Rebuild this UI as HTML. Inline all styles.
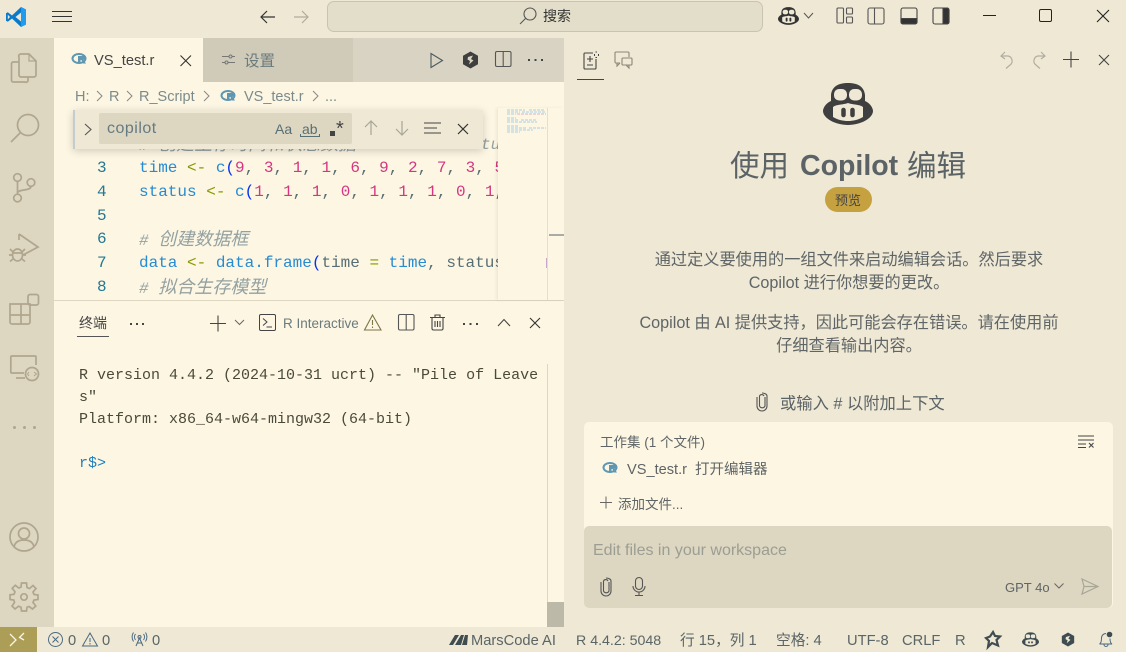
<!DOCTYPE html>
<html lang="zh"><head><meta charset="utf-8">
<style>
html,body{margin:0;padding:0;width:1126px;height:652px;overflow:hidden;background:#EEE8D5}
body{position:relative;font-family:"Liberation Sans","Noto Sans CJK SC",sans-serif;color:#586E75}
.a{position:absolute}
.t{position:absolute;white-space:pre;line-height:1}
svg{position:absolute;overflow:visible;fill:none}
.m{font-family:"Liberation Mono","Noto Sans CJK SC",monospace;font-size:16px}
.c{color:#93A1A1;font-style:italic}
.c i{font-size:18px;font-style:italic;line-height:16px}
.b{color:#268BD2}.n{color:#D33682}.g{color:#859900}.p{color:#0431FA}.d{color:#586E75}
.ln{color:#237893;font-family:"Liberation Mono",monospace;font-size:16px}
.st{font-size:14.700px;top:634px;color:#5A6566}
.cen{position:absolute;left:564px;width:570px;text-align:center;white-space:pre;color:#5F6566;font-size:16.200px;line-height:1}
</style></head><body>

<!-- backgrounds -->
<div class="a" style="left:0;top:38px;width:54px;height:589px;background:#DDD6C1"></div>
<div class="a" style="left:54px;top:38px;width:510px;height:589px;background:#FDF6E3"></div>
<div class="a" style="left:203px;top:38px;width:150px;height:44px;background:#D0CBB8"></div>
<div class="a" style="left:353px;top:38px;width:211px;height:44px;background:#D9D3C3"></div>
<div class="a" style="left:54px;top:300px;width:510px;height:1px;background:#DDD6C1"></div>
<div class="a" style="left:0;top:627px;width:37px;height:25px;background:#AC9D57"></div>

<!-- title bar -->
<svg style="left:5px;top:6px" width="22" height="22" viewBox="0 0 22 22"><path d="M16 1 21 3.500V18.500L16 21 7 12.500 2.800 15.800 1 14.800V7.200L2.800 6.200 7 9.500Z" fill="#0A7ACB"/><path d="M2.800 8.600 5 11 2.800 13.400Z" fill="#EEE8D5"/><path d="M16 1 21 3.500V18.500L16 21Z" fill="#1F9CF0"/><path d="M16 6.500 16 15.500 10.500 11Z" fill="#EEE8D5"/></svg>
<svg style="left:51px;top:10px" width="22" height="14" stroke="#333" stroke-width="1"><path d="M1 1.500H21M1 6.500H21M1 11.500H21"/></svg>
<svg style="left:259px;top:9px" width="18" height="16" stroke="#333" stroke-width="1.200"><path d="M2 8H16M8 2 2 8 8 14"/></svg>
<svg style="left:292px;top:9px" width="18" height="16" stroke="#B0AC9C" stroke-width="1.200"><path d="M2 8H16M10 2 16 8 10 14"/></svg>
<div class="a" style="left:327px;top:1px;width:434px;height:29px;background:#E3DECA;border:1px solid #C9C4AF;border-radius:7px"></div>
<svg style="left:519px;top:6px" width="18" height="19" stroke="#555" stroke-width="1.100"><circle cx="11" cy="8" r="6"/><path d="M7 12 1 18"/></svg>
<div class="t" style="left:543px;top:9px;font-size:14px;color:#333">搜索</div>
<svg style="left:778px;top:7px" width="21" height="18" viewBox="0 0 50 42"><path d="M25 0C34 0 41 3 42 12V18C47 20 50 25 50 28 50 35 38 42 25 42S0 35 0 28C0 25 3 20 8 18V12C9 3 16 0 25 0Z" fill="#333"/><path d="M10 24C14 21 20 22 25 20 30 22 36 21 40 24V34C35 37 30 38 25 38S15 37 10 34Z" fill="#EEE8D5"/><rect x="11" y="6" width="13" height="11" rx="5" fill="#EEE8D5"/><rect x="26" y="6" width="13" height="11" rx="5" fill="#EEE8D5"/><path d="M20.500 27V32M29.500 27V32" stroke="#333" stroke-width="4.500" stroke-linecap="round"/></svg>
<svg style="left:803px;top:12px" width="11" height="8" stroke="#555"><path d="M1 1 5.500 6 10 1"/></svg>
<svg style="left:836px;top:7px" width="18" height="18" stroke="#555" stroke-width="1.100"><rect x="1" y="1" width="6.500" height="15" rx="1"/><rect x="10.500" y="1" width="6" height="6" rx="1"/><rect x="10.500" y="10" width="6" height="6" rx="1"/></svg>
<svg style="left:867px;top:7px" width="19" height="18" stroke="#555" stroke-width="1.100"><rect x="1" y="1" width="16" height="16" rx="2"/><path d="M7.500 1V17"/></svg>
<svg style="left:900px;top:7px" width="19" height="18" stroke="#444" stroke-width="1.100"><rect x="1" y="1" width="16" height="16" rx="2"/><path d="M1 11.500H17V15A2 2 0 0 1 15 17H3A2 2 0 0 1 1 15Z" fill="#333"/></svg>
<svg style="left:932px;top:7px" width="19" height="18" stroke="#444" stroke-width="1.100"><rect x="1" y="1" width="16" height="16" rx="2"/><path d="M11 1H15A2 2 0 0 1 17 3V15A2 2 0 0 1 15 17H11Z" fill="#333"/></svg>
<div class="a" style="left:983px;top:15px;width:13px;height:1px;background:#222"></div>
<div class="a" style="left:1039px;top:9px;width:11px;height:11px;border:1px solid #222;border-radius:2px"></div>
<svg style="left:1096px;top:9px" width="14" height="14" stroke="#222" stroke-width="1.100"><path d="M1 1 13 13M13 1 1 13"/></svg>

<!-- activity bar -->
<svg style="left:10px;top:52px" width="28" height="32" stroke="#B0A68E" stroke-width="1.700"><path d="M9 5A2 2 0 0 1 11 2H19L26 9V23A2 2 0 0 1 24 25H11A2 2 0 0 1 9 23Z"/><path d="M19 2V9H26" stroke-width="1.200"/><path d="M9 10H3A2 2 0 0 0 1.500 12V28A2 2 0 0 0 3 30H15A2 2 0 0 0 18 28V25"/></svg>
<svg style="left:10px;top:112px" width="30" height="32" stroke="#B0A68E" stroke-width="1.700"><circle cx="18" cy="13" r="10.500"/><path d="M10.500 20.500 1 30"/></svg>
<svg style="left:12px;top:172px" width="26" height="32" stroke="#B0A68E" stroke-width="1.700"><circle cx="5.500" cy="5.500" r="3.800"/><circle cx="5.500" cy="26" r="3.800"/><circle cx="19" cy="10.500" r="3.800"/><path d="M5.500 9.500V22M5.500 21C5.500 17 19 19 19 14.500"/></svg>
<svg style="left:9px;top:232px" width="32" height="32" stroke="#B0A68E" stroke-width="1.700"><path d="M10 2 29 15 14 23"/><path d="M10 2V8"/><ellipse cx="8.500" cy="23" rx="5" ry="6"/><path d="M1 17 4 20M16 17 13 20M0 23H3.500M13.500 23H17M1 29.500 4 27M16 29.500 13 27M4 21H13"/></svg>
<svg style="left:9px;top:293px" width="32" height="32" stroke="#B0A68E" stroke-width="1.700"><path d="M1 11H12V31H3A2 2 0 0 1 1 29ZM1 22H21V29A2 2 0 0 1 19 31H12M12 11H21V22"/><rect x="19" y="1.500" width="10.500" height="10.500" rx="2"/></svg>
<svg style="left:10px;top:355px" width="30" height="30" stroke="#B0A68E" stroke-width="1.700"><path d="M14 18H2A1 1 0 0 1 .8 17V2A1 1 0 0 1 2 1H25A1 1 0 0 1 26 2V10"/><path d="M6 23H15"/><circle cx="22" cy="19" r="6.500"/><path d="M19 17 17.500 19 19 21M24 17 26.500 19 24 21" stroke-width="1"/></svg>
<div class="a" style="left:13px;top:426px;width:3px;height:3px;border-radius:2px;background:#B0A68E;box-shadow:10px 0 #B0A68E,20px 0 #B0A68E"></div>
<svg style="left:9px;top:522px" width="30" height="30" stroke="#B0A68E" stroke-width="1.700"><circle cx="15" cy="15" r="14"/><circle cx="15" cy="11.500" r="5.500"/><path d="M5 25C6 20 10 18 15 18S24 20 25 25"/></svg>
<svg style="left:9px;top:582px" width="30" height="30" viewBox="0 0 30 30" stroke="#B0A68E" stroke-width="1.700"><circle cx="15" cy="15" r="3.200"/><path d="M12.500 1H17.500L18 5.500 20.500 6.500 24 3.500 27 6.500 24 10 25 12.500 29 13V17.500L25 18 24 20.500 26.800 24 23.500 27 20 24.500 18 25.200 17.500 29H12.500L12 25.200 9.500 24.200 6 27 3 24 5.500 20.500 4.800 18 1 17.500V12.800L5 12.300 6 9.800 3.200 6.300 6.300 3.300 9.800 6 12 5Z"/></svg>

<!-- tabs -->
<svg style="left:72px;top:53px" width="15" height="12" viewBox="0 0 15 12"><ellipse cx="7" cy="5.500" rx="6.500" ry="4.500" stroke="#5F97B2" stroke-width="2"/><path d="M6 3H11.500Q13 3 13 5 13 6.500 11.500 6.800L14 10.500H11L9.500 7H8.500V10.500H6Z" fill="#5F97B2"/></svg>
<div class="t" style="left:94px;top:54px;font-size:14.700px;color:#444">VS_test.r</div>
<svg style="left:180px;top:55px" width="12" height="12" stroke="#333" stroke-width="1.100"><path d="M.5 .5 11 11M11 .5 .5 11"/></svg>
<svg style="left:222px;top:54px" width="13" height="11" stroke="#777" stroke-width="1"><path d="M0 2.500H7M10 2.500H13M0 8.500H3M6 8.500H13"/><circle cx="8.500" cy="2.500" r="1.500"/><circle cx="4.500" cy="8.500" r="1.500"/></svg>
<div class="t" style="left:244px;top:54px;font-size:15.500px;color:#6A7B7C">设置</div>
<svg style="left:430px;top:52px" width="14" height="17" stroke="#4B5A60" stroke-width="1.100"><path d="M1 1.500V15.500L12.500 8.500Z"/></svg>
<svg style="left:462px;top:51px" width="17" height="18" viewBox="0 0 17 18"><path d="M8.500 .5 16 4.700V13.300L8.500 17.500 1 13.300V4.700Z" fill="#3F3F3F"/><path d="M6 6 11 4.500 9 8 11.500 9.500 7 13.500 8 10 5.500 8.500Z" fill="#D9D3C3"/></svg>
<svg style="left:495px;top:51px" width="17" height="17" stroke="#555" stroke-width="1.100"><rect x=".5" y=".5" width="15.500" height="15" rx="1.500"/><path d="M8.200 .5V15.500"/></svg>
<div class="a" style="left:528px;top:59px;width:2px;height:2px;background:#444;box-shadow:6.500px 0 #444,13px 0 #444"></div>

<!-- breadcrumb -->
<div class="t" style="left:75px;top:90px;font-size:14.500px;color:#7B8B8C">H:</div>
<svg style="left:96px;top:90px" width="7" height="12" stroke="#888"><path d="M1 1 6 6 1 11"/></svg>
<div class="t" style="left:109px;top:90px;font-size:14.500px;color:#7B8B8C">R</div>
<svg style="left:126px;top:90px" width="7" height="12" stroke="#888"><path d="M1 1 6 6 1 11"/></svg>
<div class="t" style="left:139px;top:90px;font-size:14.500px;color:#7B8B8C">R_Script</div>
<svg style="left:203px;top:90px" width="7" height="12" stroke="#888"><path d="M1 1 6 6 1 11"/></svg>
<svg style="left:221px;top:90px" width="15" height="12" viewBox="0 0 15 12"><ellipse cx="7" cy="5.500" rx="6.500" ry="4.500" stroke="#5F97B2" stroke-width="2"/><path d="M6 3H11.500Q13 3 13 5 13 6.500 11.500 6.800L14 10.500H11L9.500 7H8.500V10.500H6Z" fill="#5F97B2"/></svg>
<div class="t" style="left:244px;top:90px;font-size:14.500px;color:#7B8B8C">VS_test.r</div>
<svg style="left:312px;top:90px" width="7" height="12" stroke="#888"><path d="M1 1 6 6 1 11"/></svg>
<div class="t" style="left:325px;top:90px;font-size:14.500px;color:#7B8B8C">...</div>

<!-- code -->
<div class="t c m" style="left:139px;top:138px"># <i>创建生存时间和状态数据</i></div>
<div class="t c m" style="left:481px;top:137px">tu.</div>
<div class="t ln" style="left:97px;top:160px">3</div>
<div class="t m b" style="left:139px;top:160px">time <span class="g">&lt;-</span> c<span class="p">(</span><span class="n">9</span><span class="d">,</span> <span class="n">3</span><span class="d">,</span> <span class="n">1</span><span class="d">,</span> <span class="n">1</span><span class="d">,</span> <span class="n">6</span><span class="d">,</span> <span class="n">9</span><span class="d">,</span> <span class="n">2</span><span class="d">,</span> <span class="n">7</span><span class="d">,</span> <span class="n">3</span><span class="d">,</span> <span class="n">5</span></div>
<div class="t ln" style="left:97px;top:184px">4</div>
<div class="t m b" style="left:139px;top:184px">status <span class="g">&lt;-</span> c<span class="p">(</span><span class="n">1</span><span class="d">,</span> <span class="n">1</span><span class="d">,</span> <span class="n">1</span><span class="d">,</span> <span class="n">0</span><span class="d">,</span> <span class="n">1</span><span class="d">,</span> <span class="n">1</span><span class="d">,</span> <span class="n">1</span><span class="d">,</span> <span class="n">0</span><span class="d">,</span> <span class="n">1</span><span class="d">,</span></div>
<div class="t ln" style="left:97px;top:208px">5</div>
<div class="t ln" style="left:97px;top:231px">6</div>
<div class="t m c" style="left:139px;top:233px"># <i>创建数据框</i></div>
<div class="t ln" style="left:97px;top:255px">7</div>
<div class="t m b" style="left:139px;top:255px">data <span class="g">&lt;-</span> data.frame<span class="p">(</span><span class="d">time</span> <span class="g">=</span> time<span class="d">,</span> <span class="d">status</span></div>
<div class="t ln" style="left:97px;top:279px">8</div>
<div class="t m c" style="left:139px;top:281px"># <i>拟合生存模型</i></div>

<!-- minimap cover -->
<div class="a" style="left:498px;top:108px;width:66px;height:192px;background:#FDF6E3;box-shadow:-2px 0 3px rgba(0,0,0,.06)"></div>
<div class="a" style="left:547px;top:108px;width:1px;height:192px;background:#E5DFCC"></div>
<div class="a" style="left:549px;top:234px;width:15px;height:2px;background:#A9ACA6"></div>
<div class="a" style="left:546px;top:258px;width:1px;height:10px;background:#C9A5C9"></div>
<svg style="left:507px;top:109px" width="40" height="28" shape-rendering="crispEdges" stroke-dasharray="3 1"><path d="M0 1H18M22 1H38M0 3H13M15 3H39" stroke="#A9CDE0"/><path d="M10 5H39" stroke="#E9A9C3"/><path d="M0 5H9M0 9H9M0 11H12M14 11H30M0 13H30M0 17H11M0 19H20M22 19H39M0 21H26M0 23H13" stroke="#A9CDE0"/></svg>

<!-- find widget -->
<div class="a" style="left:73px;top:110px;width:410px;height:39px;background:#EEE8D5;border-left:2px solid #C4CCD0;box-shadow:0 2px 8px rgba(0,0,0,.18);box-sizing:border-box"></div>
<svg style="left:84px;top:123px" width="8" height="13" stroke="#555" stroke-width="1.100"><path d="M1 1 7 6.500 1 12"/></svg>
<div class="a" style="left:99px;top:113px;width:253px;height:31px;background:#DDD6C1;border-radius:2px"></div>
<div class="t" style="left:107px;top:121px;font-size:16px;letter-spacing:.5px;color:#657B83">copilot</div>
<div class="t" style="left:275px;top:122px;font-size:14px;color:#586E75">Aa</div>
<div class="t" style="left:302px;top:122px;font-size:14px;color:#586E75">ab</div>
<svg style="left:300px;top:134px" width="20" height="4" stroke="#586E75"><path d="M.5 0V2.500H19.500V0"/></svg>
<div class="a" style="left:330px;top:131px;width:5px;height:5px;background:#444"></div>
<div class="t" style="left:336px;top:119px;font-size:20px;color:#444">*</div>
<svg style="left:364px;top:120px" width="14" height="16" stroke="#A8A697" stroke-width="1.200"><path d="M7 15V1M1 7 7 1 13 7"/></svg>
<svg style="left:395px;top:120px" width="14" height="16" stroke="#A8A697" stroke-width="1.200"><path d="M7 1V15M1 9 7 15 13 9"/></svg>
<svg style="left:424px;top:122px" width="18" height="13" stroke="#444" stroke-width="1.100"><path d="M0 1H17M0 6H13M0 11H17"/></svg>
<svg style="left:457px;top:123px" width="12" height="12" stroke="#333" stroke-width="1.200"><path d="M1 1 11 11M11 1 1 11"/></svg>

<!-- terminal header -->
<div class="t" style="left:79px;top:316px;font-size:14px;color:#444">终端</div>
<div class="a" style="left:77px;top:336px;width:32px;height:1px;background:#555"></div>
<div class="a" style="left:130px;top:323px;width:2px;height:2px;background:#444;box-shadow:6px 0 #444,12px 0 #444"></div>
<svg style="left:210px;top:315px" width="17" height="17" stroke="#444" stroke-width="1.100"><path d="M0 8.500H16M8 .5V16.500"/></svg>
<svg style="left:234px;top:319px" width="11" height="7" stroke="#666"><path d="M1 1 5.500 5.500 10 1"/></svg>
<svg style="left:259px;top:314px" width="18" height="18" stroke="#444" stroke-width="1"><rect x=".5" y=".5" width="16" height="16" rx="1.500"/><path d="M4 4.500 8 8 4 11.500M7.500 13H13"/></svg>
<div class="t" style="left:283px;top:317px;font-size:13.500px;color:#6A7B7C">R Interactive</div>
<svg style="left:364px;top:314px" width="18" height="17" stroke="#7C7548" stroke-width="1.100"><path d="M8.500 1 17 16H.5ZM8.500 6V11M8.500 12.500V14"/></svg>
<svg style="left:398px;top:314px" width="17" height="17" stroke="#555" stroke-width="1.100"><rect x=".5" y=".5" width="15.500" height="15.500" rx="1.500"/><path d="M8.200 .5V16"/></svg>
<svg style="left:430px;top:314px" width="15" height="17" stroke="#444" stroke-width="1.100"><path d="M2 4V14.500A1.500 1.500 0 0 0 3.500 16H11.500A1.500 1.500 0 0 0 13 14.500V4M0 3.500H15M5 3V1H10V3M5 7V13M7.500 7V13M10 7V13"/></svg>
<div class="a" style="left:463px;top:323px;width:2px;height:2px;background:#444;box-shadow:6.500px 0 #444,13px 0 #444"></div>
<svg style="left:497px;top:318px" width="14" height="9" stroke="#444" stroke-width="1.100"><path d="M1 8 7 1.500 13 8"/></svg>
<svg style="left:529px;top:317px" width="12" height="12" stroke="#333" stroke-width="1.100"><path d="M1 1 11 11M11 1 1 11"/></svg>

<!-- terminal -->
<div class="t" style="left:79px;top:367px;font:15px 'Liberation Mono',monospace;color:#4A4A3A">R version 4.4.2 (2024-10-31 ucrt) -- "Pile of Leave</div>
<div class="t" style="left:79px;top:389px;font:15px 'Liberation Mono',monospace;color:#4A4A3A">s"</div>
<div class="t" style="left:79px;top:411px;font:15px 'Liberation Mono',monospace;color:#4A4A3A">Platform: x86_64-w64-mingw32 (64-bit)</div>
<div class="t" style="left:79px;top:455px;font:15px 'Liberation Mono',monospace;color:#1F7FC0">r$&gt;</div>
<div class="a" style="left:547px;top:364px;width:1px;height:238px;background:#DDD6C1"></div>
<div class="a" style="left:547px;top:602px;width:17px;height:25px;background:#BDB9A9"></div>

<!-- right panel header -->
<svg style="left:582px;top:51px" width="18" height="19" stroke="#444" stroke-width="1.100"><path d="M11 2H3A1 1 0 0 0 2 3V17A1 1 0 0 0 3 18H13A1 1 0 0 0 14 17V8M8 5V11M5 8H11M5 14H11"/><path d="M13.500 1H15M12.500 3V5M16.500 3V5M13.500 6.500H15" stroke-width="1"/></svg>
<div class="a" style="left:577px;top:79px;width:27px;height:1px;background:#444"></div>
<svg style="left:614px;top:51px" width="19" height="18" stroke="#8A8677" stroke-width="1.100"><path d="M6 12H2A1 1 0 0 1 1 11V2A1 1 0 0 1 2 1H14A1 1 0 0 1 15 2V6"/><path d="M3 12V15L6 12"/><rect x="8" y="7" width="10" height="7" rx="1"/><path d="M15 14V17L12 14"/></svg>
<svg style="left:1000px;top:51px" width="14" height="18" stroke="#B2AE9F" stroke-width="1.200"><path d="M5 1 1 5 5 8M1 5H8A5 5 0 0 1 10 14L6 17.500"/></svg>
<svg style="left:1032px;top:51px" width="14" height="18" stroke="#B2AE9F" stroke-width="1.200"><path d="M9 1 13 5 9 8M13 5H6A5 5 0 0 0 4 14L8 17.500"/></svg>
<svg style="left:1063px;top:51px" width="17" height="17" stroke="#444" stroke-width="1.100"><path d="M0 8.500H16M8 .5V16.500"/></svg>
<svg style="left:1098px;top:54px" width="12" height="12" stroke="#444" stroke-width="1.100"><path d="M1 1 11 11M11 1 1 11"/></svg>

<!-- Copilot big -->
<svg style="left:823px;top:83px" width="50" height="42" viewBox="0 0 50 42"><path d="M25 0C34 0 41 3 42 12V18C47 20 50 25 50 28 50 35 38 42 25 42S0 35 0 28C0 25 3 20 8 18V12C9 3 16 0 25 0Z" fill="#3F3F3F"/><path d="M10 24C14 21 20 22 25 20 30 22 36 21 40 24V34C35 37 30 38 25 38S15 37 10 34Z" fill="#EEE8D5"/><rect x="11" y="6" width="13" height="11.500" rx="5" fill="#EEE8D5"/><rect x="26" y="6" width="13" height="11.500" rx="5" fill="#EEE8D5"/><path d="M20.500 27V32M29.500 27V32" stroke="#3F3F3F" stroke-width="4.500" stroke-linecap="round"/></svg>
<div class="t" style="left:730px;top:152px;font-size:29.500px;color:#5B6366">使用</div>
<div class="t" style="left:800px;top:152px;font-size:28.500px;font-weight:bold;color:#5B6366">Copilot</div>
<div class="t" style="left:907px;top:152px;font-size:29.500px;color:#5B6366">编辑</div>
<div class="a" style="left:825px;top:187px;width:47px;height:25px;border-radius:13px;background:#C5A140"></div>
<div class="t" style="left:835px;top:194px;font-size:13px;color:#444">预览</div>

<div class="cen" style="top:252px">通过定义要使用的一组文件来启动编辑会话。然后要求</div>
<div class="cen" style="top:275px">Copilot 进行你想要的更改。</div>
<div class="cen" style="top:315px">Copilot 由 AI 提供支持，因此可能会存在错误。请在使用前</div>
<div class="cen" style="top:338px">仔细查看输出内容。</div>

<svg style="left:756px;top:392px" width="12" height="20" stroke="#555" stroke-width="1.100"><path d="M9 5V14A3 3 0 0 1 3.500 14V4A2.500 2.500 0 0 1 8 4V4"/><path d="M1 5V14A5 5 0 0 0 11 14V4A5 3 0 0 0 6 1"/></svg>
<div class="t" style="left:780px;top:396px;font-size:16.300px;color:#5B6366">或输入 # 以附加上下文</div>

<!-- Card -->
<div class="a" style="left:584px;top:422px;width:529px;height:186px;background:#FDF6E3;border-radius:5px"></div>
<div class="t" style="left:600px;top:436px;font-size:13.500px;color:#5F6566">工作集 (1 个文件)</div>
<svg style="left:1078px;top:435px" width="18" height="13" stroke="#444" stroke-width="1.100"><path d="M0 1H16M0 5H16M0 9H8M0 12.500H8M11 8 15.500 12.500M15.500 8 11 12.500"/></svg>
<svg style="left:603px;top:462px" width="15" height="12" viewBox="0 0 15 12"><ellipse cx="7" cy="5.500" rx="6.500" ry="4.500" stroke="#5F97B2" stroke-width="2"/><path d="M6 3H11.500Q13 3 13 5 13 6.500 11.500 6.800L14 10.500H11L9.500 7H8.500V10.500H6Z" fill="#5F97B2"/></svg>
<div class="t" style="left:627px;top:463px;font-size:14.600px;color:#5F6566">VS_test.r</div>
<div class="t" style="left:695px;top:463px;font-size:14.500px;color:#5F6566">打开编辑器</div>
<svg style="left:600px;top:496px" width="13" height="13" stroke="#666"><path d="M0 6.500H12M6 .5V12.500"/></svg>
<div class="t" style="left:618px;top:498px;font-size:13.500px;color:#5F6566">添加文件...</div>
<div class="a" style="left:584px;top:526px;width:528px;height:82px;background:#DDD6C1;border-radius:5px"></div>
<div class="t" style="left:593px;top:543px;font-size:16px;color:#9B9E93">Edit files in your workspace</div>
<svg style="left:600px;top:577px" width="12" height="20" stroke="#555" stroke-width="1.100"><path d="M9 5V14A3 3 0 0 1 3.500 14V4A2.500 2.500 0 0 1 8 4V4"/><path d="M1 5V14A5 5 0 0 0 11 14V4A5 3 0 0 0 6 1"/></svg>
<svg style="left:632px;top:577px" width="14" height="19" stroke="#555" stroke-width="1.100"><rect x="3.500" y=".5" width="7" height="12" rx="3.500"/><path d="M1 9A6 6 0 0 0 13 9M7 15V18M3 18.500H11"/></svg>
<div class="t" style="left:1005px;top:581px;font-size:13px;color:#5F6566">GPT 4o</div>
<svg style="left:1054px;top:583px" width="10" height="7" stroke="#666"><path d="M.5 .5 5 5 9.500 .5"/></svg>
<svg style="left:1081px;top:578px" width="18" height="17" stroke="#A8A697" stroke-width="1.200"><path d="M1 1 17 8.500 1 16 3 8.500ZM3 8.500H17"/></svg>

<!-- status bar -->
<svg style="left:9px;top:632px" width="17" height="15" stroke="#FDF6E3" stroke-width="1.300"><path d="M1 2 7 8 1 14M15 1 10.500 5.500 15 8"/></svg>
<svg style="left:48px;top:632px" width="15" height="15" stroke="#4B6A80" stroke-width="1"><circle cx="7.500" cy="7.500" r="7"/><path d="M4.500 4.500 10.500 10.500M10.500 4.500 4.500 10.500"/></svg>
<div class="t st" style="left:68px">0</div>
<svg style="left:82px;top:632px" width="16" height="15" stroke="#4B6A80" stroke-width="1"><path d="M8 1 15.500 14H.5ZM8 6V10M8 11V12.500"/></svg>
<div class="t st" style="left:102px">0</div>
<svg style="left:132px;top:632px" width="15" height="15" stroke="#4B6A80" stroke-width="1"><circle cx="7.500" cy="5" r="1.500"/><path d="M4 14 7.500 6 11 14M5 11H10M3.500 2A5 5 0 0 0 3.500 8M11.500 2A5 5 0 0 1 11.500 8M1.500 .5A8 8 0 0 0 1.500 9.500M13.500 .5A8 8 0 0 1 13.500 9.500"/></svg>
<div class="t st" style="left:152px">0</div>
<svg style="left:449px;top:634px" width="20" height="12"><path d="M0 11 6 1H10L4 11ZM6 11 12 1H15L12 11ZM13 11 16 1H19L18 11Z" fill="#3F4C50"/></svg>
<div class="t st" style="left:471px">MarsCode AI</div>
<div class="t st" style="left:576px;font-size:14.200px">R 4.4.2: 5048</div>
<div class="t st" style="left:680px">行 15，列 1</div>
<div class="t st" style="left:776px">空格: 4</div>
<div class="t st" style="left:847px">UTF-8</div>
<div class="t st" style="left:902px">CRLF</div>
<div class="t st" style="left:955px">R</div>
<svg style="left:985px;top:631px" width="16" height="17" viewBox="0 0 16 17" stroke="#3F4C50" stroke-width="2.200"><path d="M8 1 10 5 15 5.500 11.500 9 13 14.500 7 12 3 16 4 10 1 7 5 5.500Z"/></svg>
<svg style="left:1022px;top:632px" width="17" height="15" viewBox="0 0 50 42"><path d="M25 0C34 0 41 3 42 12V18C47 20 50 25 50 28 50 35 38 42 25 42S0 35 0 28C0 25 3 20 8 18V12C9 3 16 0 25 0Z" fill="#3F4C50"/><path d="M10 24C14 21 20 22 25 20 30 22 36 21 40 24V34C35 37 30 38 25 38S15 37 10 34Z" fill="#EEE8D5"/><rect x="11" y="6" width="13" height="11" rx="5" fill="#EEE8D5"/><rect x="26" y="6" width="13" height="11" rx="5" fill="#EEE8D5"/><path d="M20.500 27V32M29.500 27V32" stroke="#3F4C50" stroke-width="5"/></svg>
<svg style="left:1061px;top:632px" width="14" height="15" viewBox="0 0 17 18"><path d="M8.500 .5 16 4.700V13.300L8.500 17.500 1 13.300V4.700Z" fill="#3F4C50"/><path d="M6 6 11 4.500 9 8 11.500 9.500 7 13.500 8 10 5.500 8.500Z" fill="#EEE8D5"/></svg>
<svg style="left:1098px;top:631px" width="16" height="17" stroke="#4B6A80" stroke-width="1"><path d="M1.500 13C3.500 12 3.500 9 3.500 7S5 2.500 8 2.500M12 7.500C12 9 12 12 14 13H1.500M6 13.500A2 2 0 0 0 10 13.500"/><circle cx="11.500" cy="3.500" r="2.800" fill="#3F4C50" stroke="none"/></svg>

</body></html>
